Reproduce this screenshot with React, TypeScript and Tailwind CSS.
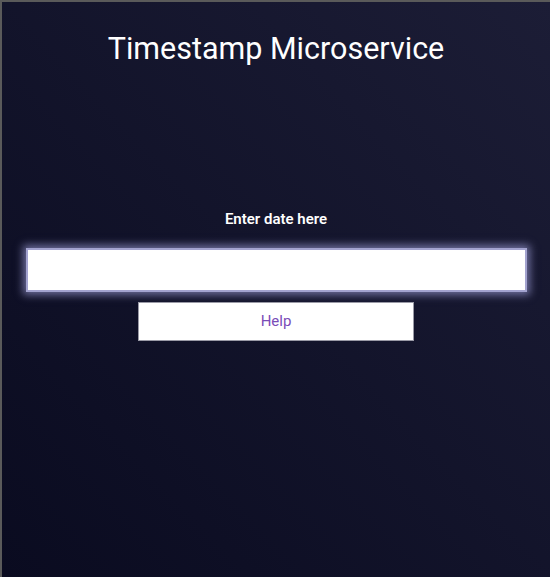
export default function App() {
  return (
    <div
      className="h-[577px] w-[550px] border-l-2 border-t-2 border-[#5a5a5a] bg-gradient-to-tr from-[#0a0b20] to-[#1c1d36] text-white"
      style={{ fontFamily: 'Roboto, "Noto Sans", sans-serif' }}
    >
      <div className="flex flex-col items-center">
        <h1 className="mt-[28px] text-[30.5px] leading-[38px] font-normal">Timestamp Microservice</h1>
        <p className="mt-[142px] text-[15px] leading-[18px] font-semibold">Enter date here</p>
        <input
          type="text"
          className="mt-[20px] h-[44px] w-[501px] border-2 border-[#a3a3cf] bg-white shadow-[0_0_8px_3px_rgba(170,170,230,0.6)] outline-none"
        />
        <button className="mt-[10px] h-[39px] w-[276px] border border-[#9a9aa6] bg-white text-[15px] text-[#7a4cb8]">
          Help
        </button>
      </div>
    </div>
  );
}
